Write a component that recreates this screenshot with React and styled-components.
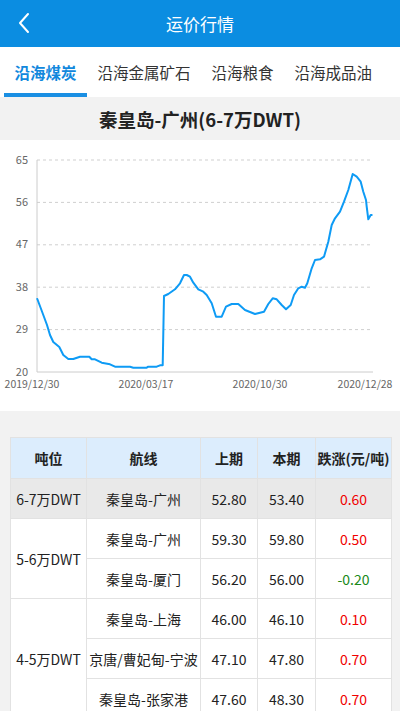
import React from 'react';
import styled, { createGlobalStyle } from 'styled-components';

const GlobalStyle = createGlobalStyle`
  html, body {
    margin: 0;
    padding: 0;
    background: #fff;
    font-family: 'Noto Sans CJK SC', 'Noto Sans', sans-serif;
  }
  * { box-sizing: border-box; }
`;

const Page = styled.div`
  width: 400px;
  height: 711px;
  overflow: hidden;
  background: #f2f2f2;
`;

const Header = styled.header`
  height: 47px;
  background: #0b8de1;
  display: flex;
  align-items: center;
  justify-content: center;
  position: relative;
  color: #fff;
  font-size: 17px;
`;

const BackButton = styled.button`
  position: absolute;
  left: 12px;
  top: 10px;
  width: 24px;
  height: 26px;
  padding: 0;
  border: none;
  background: none;
  display: flex;
  align-items: center;
  justify-content: center;
`;

const Tabs = styled.nav`
  height: 50px;
  background: #fff;
  display: flex;
  align-items: stretch;
  padding-left: 4px;
`;

const Tab = styled.div`
  padding: 4px 10.5px 0;
  display: flex;
  align-items: center;
  font-size: 15.5px;
  color: ${({ active }) => (active ? '#1188dd' : '#333')};
  font-weight: ${({ active }) => (active ? 700 : 400)};
  border-bottom: 4px solid ${({ active }) => (active ? '#1a8fe3' : 'transparent')};
`;

const TitleBar = styled.div`
  height: 43px;
  background: #f2f2f2;
  display: flex;
  align-items: center;
  justify-content: center;
  font-size: 18.5px;
  font-weight: 700;
  color: #222;
`;

const ChartBox = styled.div`
  height: 271px;
  background: #fff;
  svg { display: block; }
`;

const TableWrap = styled.div`
  padding: 26px 9px 0 10px;
`;

const Table = styled.table`
  width: 100%;
  border-collapse: collapse;
  background: #fff;
  font-size: 14px;
  color: #222;
  table-layout: fixed;
`;

const Th = styled.th`
  background: #dcedfd;
  height: 41px;
  font-weight: 700;
  border: 1px solid #e2e2e2;
  text-align: center;
  padding: 0;
  white-space: nowrap;
`;

const Td = styled.td`
  height: 40px;
  border: 1px solid #e2e2e2;
  text-align: center;
  padding: 0;
  white-space: nowrap;
  background: ${({ highlight }) => (highlight ? '#e9e9e9' : '#fff')};
  color: ${({ tone }) => (tone === 'up' ? '#f00000' : tone === 'down' ? '#1a8a1a' : '#222')};
`;

const yTicks = [65, 56, 47, 38, 29, 20];
const xLabels = [
  { x: 32, text: '2019/12/30' },
  { x: 146, text: '2020/03/17' },
  { x: 260, text: '2020/10/30' },
  { x: 365, text: '2020/12/28' },
];

const pts = [
  [37.3, 299], [40.7, 308], [43.3, 315], [47, 325], [50, 335], [53.3, 342], [59.3, 347],
  [63.3, 355], [68.3, 359], [73.3, 359], [80, 356.7], [89.3, 356.7], [91.7, 359.3],
  [95, 359.3], [101.7, 362.7], [110, 364.3], [115, 366.7], [130, 366.7], [133.3, 367.7],
  [146.7, 367.7], [148.3, 366.7], [156.7, 366.7], [160, 365.3], [162.7, 365.3], [164, 296],
  [168.3, 294], [175, 289.3], [180, 283.3], [184, 275], [186.7, 275], [190, 276.7],
  [193.3, 282.7], [198.3, 289.3], [203.3, 291.7], [206.7, 295], [211.7, 303.3],
  [216, 316.7], [221.7, 316.7], [226, 306.7], [231.7, 304], [238.3, 304], [245, 310],
  [255, 314], [260, 312.7], [264, 311.7], [268.3, 304], [272.7, 298.3], [276.7, 299.3],
  [281.7, 305], [286, 309.3], [290.7, 305], [294, 295], [298.3, 288.3], [301.7, 286.7],
  [305, 287.7], [307.3, 283.3], [311.7, 268.3], [315, 260], [320, 259.3], [324, 256.7],
  [328.3, 241.7], [331.7, 225], [335, 218.3], [340, 211.7], [344, 201.7], [348.3, 190],
  [352.7, 174], [356.7, 176.7], [360.7, 181.7], [363.3, 191.7], [366, 200], [366.7, 206.7],
  [368.3, 219.3], [370.7, 215], [371.7, 215],
];

const OFFSET = 140;
const axisFont = "'Noto Sans CJK SC', 'Noto Sans', sans-serif";

function PriceChart() {
  const line = pts.map(([x, y]) => `${x},${(y - OFFSET).toFixed(1)}`).join(' ');
  return (
    <svg width="400" height="271" viewBox="0 0 400 271">
      {yTicks.map((v, i) => {
        const y = 160 + i * 42.4 - OFFSET;
        return (
          <g key={v}>
            {v !== 20 && (
              <line x1="37" x2="373" y1={y} y2={y} stroke="#cfcfcf" strokeWidth="1" strokeDasharray="3 3" />
            )}
            <text x="28" y={y + 3.5} textAnchor="end" fontSize="11" fill="#666" fontFamily={axisFont}>
              {v}
            </text>
          </g>
        );
      })}
      <line x1="37" x2="37" y1={160 - OFFSET} y2={372 - OFFSET} stroke="#ccc" strokeWidth="1" />
      <line x1="37" x2="373" y1={372 - OFFSET} y2={372 - OFFSET} stroke="#ccc" strokeWidth="1" />
      {xLabels.map((l) => (
        <text key={l.text} x={l.x} y={388 - OFFSET} textAnchor="middle" fontSize="10.5" fill="#666" fontFamily={axisFont}>
          {l.text}
        </text>
      ))}
      <polyline points={line} fill="none" stroke="#0e9bf5" strokeWidth="2" strokeLinejoin="round" strokeLinecap="round" />
    </svg>
  );
}

const rows = [
  { group: '6-7万DWT', span: 1, route: '秦皇岛-广州', prev: '52.80', cur: '53.40', diff: '0.60', highlight: true },
  { group: '5-6万DWT', span: 2, route: '秦皇岛-广州', prev: '59.30', cur: '59.80', diff: '0.50' },
  { route: '秦皇岛-厦门', prev: '56.20', cur: '56.00', diff: '-0.20' },
  { group: '4-5万DWT', span: 3, route: '秦皇岛-上海', prev: '46.00', cur: '46.10', diff: '0.10' },
  { route: '京唐/曹妃甸-宁波', prev: '47.10', cur: '47.80', diff: '0.70' },
  { route: '秦皇岛-张家港', prev: '47.60', cur: '48.30', diff: '0.70' },
];

export default function App() {
  return (
    <Page>
      <GlobalStyle />
      <Header>
        <BackButton aria-label="返回">
          <svg width="14" height="22" viewBox="0 0 14 22">
            <polyline points="11,2 3,11 11,20" fill="none" stroke="#fff" strokeWidth="2" strokeLinecap="round" strokeLinejoin="round" />
          </svg>
        </BackButton>
        运价行情
      </Header>
      <Tabs>
        <Tab active>沿海煤炭</Tab>
        <Tab>沿海金属矿石</Tab>
        <Tab>沿海粮食</Tab>
        <Tab>沿海成品油</Tab>
      </Tabs>
      <TitleBar>秦皇岛-广州(6-7万DWT)</TitleBar>
      <ChartBox>
        <PriceChart />
      </ChartBox>
      <TableWrap>
        <Table>
          <colgroup>
            <col style={{ width: 76 }} />
            <col style={{ width: 114 }} />
            <col style={{ width: 57 }} />
            <col style={{ width: 58 }} />
            <col style={{ width: 76 }} />
          </colgroup>
          <thead>
            <tr>
              <Th>吨位</Th>
              <Th>航线</Th>
              <Th>上期</Th>
              <Th>本期</Th>
              <Th>跌涨(元/吨)</Th>
            </tr>
          </thead>
          <tbody>
            {rows.map((r, i) => (
              <tr key={i}>
                {r.group && (
                  <Td rowSpan={r.span} highlight={r.highlight}>
                    {r.group}
                  </Td>
                )}
                <Td highlight={r.highlight}>{r.route}</Td>
                <Td highlight={r.highlight}>{r.prev}</Td>
                <Td highlight={r.highlight}>{r.cur}</Td>
                <Td highlight={r.highlight} tone={r.diff.startsWith('-') ? 'down' : 'up'}>
                  {r.diff}
                </Td>
              </tr>
            ))}
          </tbody>
        </Table>
      </TableWrap>
    </Page>
  );
}
